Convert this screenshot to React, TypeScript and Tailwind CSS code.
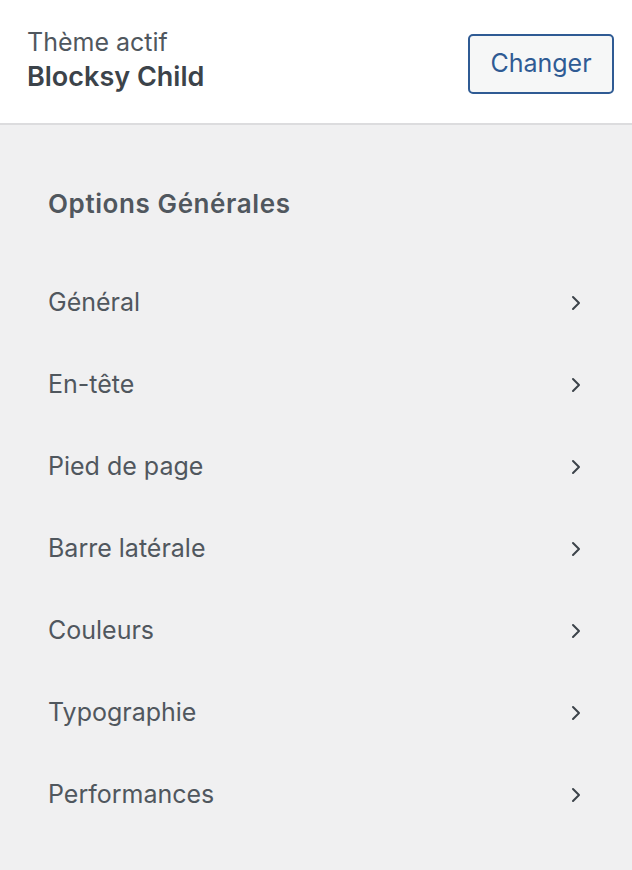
import { ChevronRight } from "lucide-react";

const ITEMS = [
  "Général",
  "En-tête",
  "Pied de page",
  "Barre latérale",
  "Couleurs",
  "Typographie",
  "Performances",
];

function SectionItem({ label }: { label: string }) {
  return (
    <li className="flex items-center justify-between h-[82px] pl-12 pr-[44px] cursor-pointer">
      <span className="text-[25px] text-[#50575e]">{label}</span>
      <ChevronRight className="w-6 h-6 text-[#3c434a]" strokeWidth={2} />
    </li>
  );
}

export default function App() {
  return (
    <div className="w-[632px] h-[870px] bg-[#f0f0f1] font-['Inter','Liberation_Sans',sans-serif] overflow-hidden">
      {/* en-tête du thème actif */}
      <div className="flex items-center justify-between h-[125px] bg-white border-b-2 border-[#dcdcde] pl-[27px] pr-[18px]">
        <div className="flex flex-col mb-[4px]">
          <span className="text-[25px] leading-[34px] text-[#50575e]">Thème actif</span>
          <span className="text-[27px] leading-[36px] font-semibold text-[#3c434a]">Blocksy Child</span>
        </div>
        <button className="mt-[4px] h-[60px] w-[146px] rounded-[5px] border-2 border-[#2f5b94] bg-[#f6f7f7] text-[25px] text-[#2f5b94]">
          Changer
        </button>
      </div>

      <div className="pt-[61px]">
        <h3 className="pl-12 text-[26px] leading-[36px] tracking-[0.6px] font-semibold text-[#50575e]">Options Générales</h3>
        <ul className="mt-[40px]">
          {ITEMS.map(item => (
            <SectionItem key={item} label={item} />
          ))}
        </ul>
      </div>
    </div>
  );
}
